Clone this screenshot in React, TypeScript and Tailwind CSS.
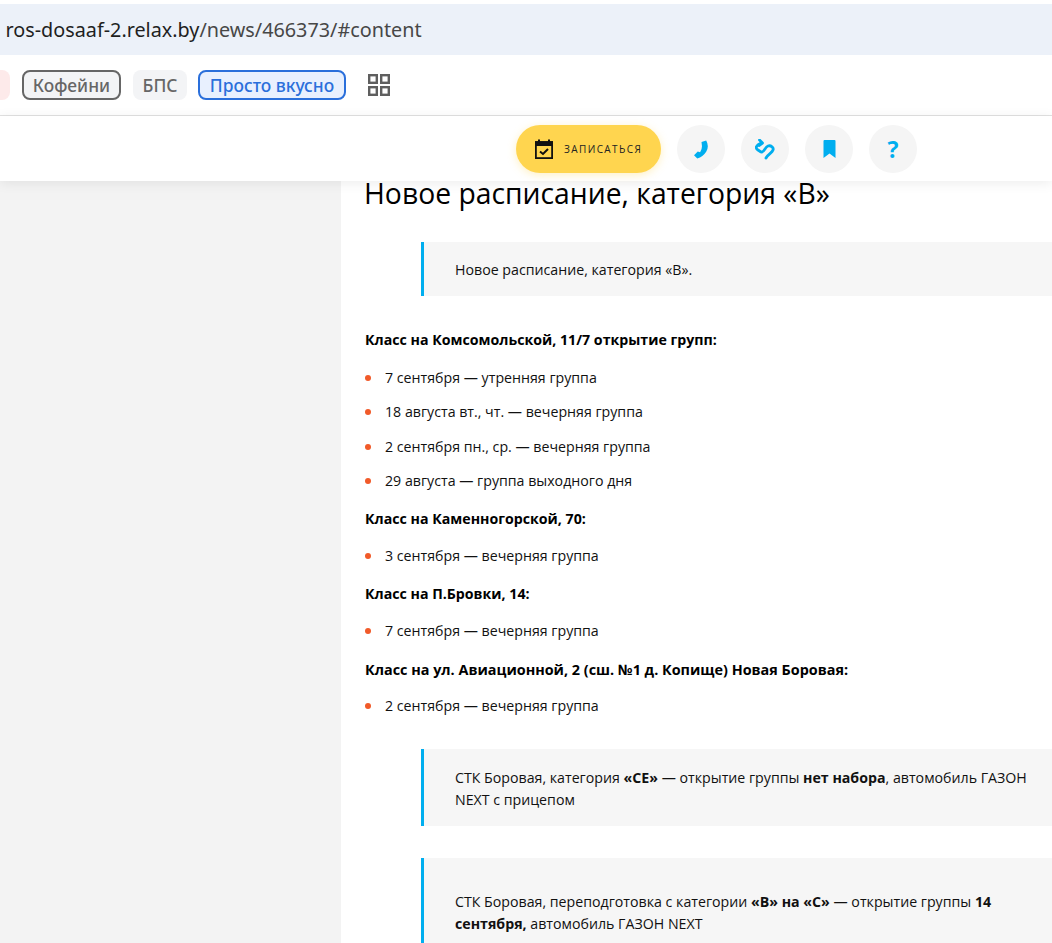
function Bullet({ children }: { children: string }) {
  return (
    <li className="flex h-[34.3px] items-center">
      <span className="mr-[14px] h-[6px] w-[6px] rounded-full bg-[#f15a29]" />
      {children}
    </li>
  );
}

function RoundIcon({ children }: { children: React.ReactNode }) {
  return <div className="flex h-12 w-12 items-center justify-center rounded-full bg-[#f5f5f5] text-[#00aeef]">{children}</div>;
}

export default function App() {
  return (
    <div className="h-[943px] w-[1052px] overflow-hidden bg-white font-['Open_Sans',sans-serif] text-[14.2px] text-[#111]">
      <div className="pt-1">
        <div className="flex h-[51px] items-center bg-[#ecf1f9] pl-[5.5px] font-['Noto_Sans',sans-serif] text-[19.8px] text-[#1f1f1f]">
          ros-dosaaf-2.relax.by<span className="text-[#474747]">/news/466373/#content</span>
        </div>
      </div>

      <div className="flex h-[61px] items-center border-b border-[#e2e2e2] font-['Noto_Sans',sans-serif] text-[17.4px] font-medium">
        <div className="ml-[-10px] h-[30px] w-[20px] rounded-lg bg-[#fdeaea]" />
        <div className="ml-3 flex h-[30px] w-[99px] items-center justify-center rounded-lg border-2 border-[#666] bg-[#f3f4f6] text-[#666]">Кофейни</div>
        <div className="ml-3 flex h-[30px] w-[54px] items-center justify-center rounded-lg bg-[#f3f4f6] text-[#666]">БПС</div>
        <div className="ml-[11px] flex h-[30px] w-[148px] items-center justify-center rounded-lg border-2 border-[#2a6fdb] bg-[#e8f0fe] text-[#2a6fdb]">Просто вкусно</div>
        <svg className="ml-[22px]" width="22" height="22" viewBox="0 0 22 22" fill="none" stroke="#5f5f5f" strokeWidth="2.4">
          <rect x="1.2" y="1.2" width="7.6" height="7.6" />
          <rect x="13.2" y="1.2" width="7.6" height="7.6" />
          <rect x="1.2" y="13.2" width="7.6" height="7.6" />
          <rect x="13.2" y="13.2" width="7.6" height="7.6" />
        </svg>
      </div>

      <div className="relative z-10 flex h-[65px] items-start gap-4 bg-white pl-[516px] pt-[9px] shadow-[0_2px_12px_rgba(0,0,0,0.08)]">
        <div className="flex h-12 w-[145px] items-center rounded-full bg-[#ffd54f] pl-[19px] text-[#222] shadow-[0_2px_8px_rgba(255,213,79,0.35)]">
          <svg width="18" height="20" viewBox="0 0 18 20" fill="none" className="text-[#111]">
            <path d="M0 2.5 H3 V0.5 H5 V2.5 H13 V0.5 H15 V2.5 H18 V7 H0 Z" fill="currentColor" />
            <rect x="0.9" y="3" width="16.2" height="16.1" stroke="currentColor" strokeWidth="1.8" />
            <path d="M5 12.5 L8 15 L13 10" stroke="currentColor" strokeWidth="2" />
          </svg>
          <span className="ml-[11px] text-[10px] font-medium tracking-[1.4px]">ЗАПИСАТЬСЯ</span>
        </div>
        <RoundIcon>
          <svg width="15" height="19" viewBox="0 0 16 19" fill="currentColor">
            <path d="M8 1.5 L13 0 Q16.5 6 13 12 Q9.5 17.5 3.5 19 L0 15.5 L4 11.5 L6.5 12.5 Q8.5 9.5 8.5 6 Z" />
          </svg>
        </RoundIcon>
        <RoundIcon>
          <svg width="20" height="21" viewBox="0 0 20 21" fill="none" stroke="currentColor" strokeWidth="2.8" strokeLinecap="round" strokeLinejoin="round">
            <path d="M6 4 C1 6 0 9 3 11 L6 13 C9 14 10 8 13 7 C16 6 19 9 18 11 C17 14 13 15 11 19" />
            <path d="M4.5 1 L7.5 4 L4 6.5" />
          </svg>
        </RoundIcon>
        <RoundIcon>
          <svg width="13" height="18" viewBox="0 0 13 18" fill="currentColor">
            <path d="M0.5 1 Q0.5 0 1.5 0 H11.5 Q12.5 0 12.5 1 V18 L6.5 13.5 L0.5 18 Z" />
          </svg>
        </RoundIcon>
        <RoundIcon>
          <span className="text-[23px] font-bold leading-none">?</span>
        </RoundIcon>
      </div>

      <div className="flex">
        <div className="h-[762px] w-[341px] shrink-0 bg-[#f3f3f3]" />
        <div className="flex-1 pl-6 leading-[26px]">
          <h1 className="ml-[-1px] mt-[-7px] text-[28.3px] font-normal leading-[38px] text-black">Новое расписание, категория «В»</h1>
          <div className="ml-14 mt-[30px] flex h-[54px] items-center border-l-[3px] border-[#00aeef] bg-[#f6f6f6] pl-[31px] pt-px">Новое расписание, категория «В».</div>
          <p className="mt-[31px] font-bold text-black">Класс на Комсомольской, 11/7 открытие групп:</p>
          <ul className="mt-[8px]">
            <Bullet>7 сентября — утренняя группа</Bullet>
            <Bullet>18 августа вт., чт. — вечерняя группа</Bullet>
            <Bullet>2 сентября пн., ср. — вечерняя группа</Bullet>
            <Bullet>29 августа — группа выходного дня</Bullet>
          </ul>
          <p className="mt-[8px] font-bold text-black">Класс на Каменногорской, 70:</p>
          <ul className="mt-[7px]">
            <Bullet>3 сентября — вечерняя группа</Bullet>
          </ul>
          <p className="mt-[8px] font-bold text-black">Класс на П.Бровки, 14:</p>
          <ul className="mt-[6px]">
            <Bullet>7 сентября — вечерняя группа</Bullet>
          </ul>
          <p className="mt-[9px] text-[14.4px] font-bold text-black">Класс на ул. Авиационной, 2 (сш. №1 д. Копище) Новая Боровая:</p>
          <ul className="mt-[6px]">
            <Bullet>2 сентября — вечерняя группа</Bullet>
          </ul>
          <div className="ml-14 mt-[26px] h-[77px] border-l-[3px] border-[#00aeef] bg-[#f6f6f6] pl-[31px] pr-5 pt-[18px] leading-[22px]">
            <p>СТК Боровая, категория <b>«СЕ»</b> — открытие группы <b>нет набора</b>, автомобиль ГАЗОН NEXT с прицепом</p>
          </div>
          <div className="ml-14 mt-[32px] h-[100px] border-l-[3px] border-[#00aeef] bg-[#f6f6f6] pl-[31px] pr-5 pt-[33px] leading-[22px]">
            <p>СТК Боровая, переподготовка с категории <b>«В» на «С»</b> — открытие группы <b>14 сентября,</b> автомобиль ГАЗОН NEXT</p>
          </div>
        </div>
      </div>
    </div>
  );
}
